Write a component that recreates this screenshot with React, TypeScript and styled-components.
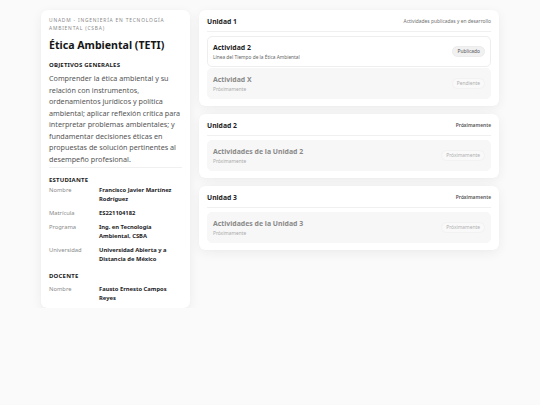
import styled, { createGlobalStyle } from "styled-components";

type Unit = {
  title: string;
  note: string;
  noteStrong?: boolean;
  items: { title: string; sub: string; status: string; active: boolean }[];
};

const units: Unit[] = [
  {
    title: "Unidad 1",
    note: "Actividades publicadas y en desarrollo",
    items: [
      {
        title: "Actividad 2",
        sub: "Línea del Tiempo de la Ética Ambiental",
        status: "Publicado",
        active: true,
      },
      { title: "Actividad X", sub: "Próximamente", status: "Pendiente", active: false },
    ],
  },
  {
    title: "Unidad 2",
    note: "Próximamente",
    noteStrong: true,
    items: [
      {
        title: "Actividades de la Unidad 2",
        sub: "Próximamente",
        status: "Próximamente",
        active: false,
      },
    ],
  },
  {
    title: "Unidad 3",
    note: "Próximamente",
    noteStrong: true,
    items: [
      {
        title: "Actividades de la Unidad 3",
        sub: "Próximamente",
        status: "Próximamente",
        active: false,
      },
    ],
  },
];

const student = [
  { label: "Nombre", value: "Francisco Javier Martínez Rodríguez" },
  { label: "Matrícula", value: "ES221104182" },
  { label: "Programa", value: "Ing. en Tecnología Ambiental, CSBA" },
  { label: "Universidad", value: "Universidad Abierta y a Distancia de México" },
];

const GlobalStyle = createGlobalStyle`
  body {
    margin: 0;
    background: #fafafa;
    font-family: "Noto Sans", "Open Sans", sans-serif;
    color: #1d1d1f;
  }
`;

const Page = styled.div`
  width: 458px;
  margin: 0 auto;
  padding-top: 10px;
  display: grid;
  grid-template-columns: 149px 300px;
  gap: 9px;
  align-items: start;
`;

const Card = styled.section`
  background: #fff;
  border-radius: 6px;
  box-shadow: 0 3px 12px rgba(0, 0, 0, 0.06), 0 0 1px rgba(0, 0, 0, 0.05);
`;

const InfoCard = styled(Card)`
  padding: 6px 8px 5px;
`;

const Kicker = styled.div`
  font-size: 4.9px;
  line-height: 8px;
  letter-spacing: 0.8px;
  text-transform: uppercase;
  color: #8a8a8a;
`;

const Title = styled.h1`
  margin: 4px 0 7px;
  font-size: 10.6px;
  line-height: 18px;
  font-weight: 700;
  color: #161616;
  white-space: nowrap;
`;

const Section = styled.h2<{ $space?: number }>`
  margin: 0 0 ${({ $space }) => $space ?? 4}px;
  font-size: 6px;
  line-height: 8px;
  font-weight: 700;
  letter-spacing: 0.2px;
  color: #222;
`;

const Paragraph = styled.p`
  margin: 0;
  font-size: 7.2px;
  line-height: 11.5px;
  color: #555;
  padding-bottom: 2px;
  border-bottom: 1px solid #f0f0f0;
`;

const Block = styled.div`
  margin-top: 8px;
`;

const Rows = styled.div`
  display: flex;
  flex-direction: column;
  gap: 5px;
`;

const Row = styled.div`
  display: grid;
  grid-template-columns: 50px 1fr;
  font-size: 5.8px;
  line-height: 9px;
`;

const Label = styled.span`
  color: #8a8a8a;
`;

const Value = styled.span`
  color: #1d1d1f;
  font-weight: 700;
`;

const Column = styled.div`
  display: flex;
  flex-direction: column;
  gap: 8px;
`;

const UnitCard = styled(Card)`
  padding: 0 8px 7px;
`;

const UnitHeader = styled.div`
  display: flex;
  justify-content: space-between;
  align-items: center;
  height: 22px;
  padding-top: 1px;
  box-sizing: border-box;
  border-bottom: 1px solid #f0f0f0;
  margin-bottom: 4px;
`;

const UnitTitle = styled.h3`
  margin: 0;
  font-size: 6.8px;
  font-weight: 700;
  color: #1d1d1f;
`;

const UnitNote = styled.span<{ $strong?: boolean }>`
  font-size: 4.9px;
  color: ${({ $strong }) => ($strong ? "#555" : "#707070")};
  font-weight: ${({ $strong }) => ($strong ? 600 : 400)};
`;

const List = styled.div`
  display: flex;
  flex-direction: column;
  gap: 1px;
`;

const Item = styled.div<{ $active: boolean }>`
  display: flex;
  justify-content: space-between;
  align-items: center;
  height: 31px;
  box-sizing: border-box;
  padding: 0 5px;
  border-radius: 5px;
  background: ${({ $active }) => ($active ? "#fff" : "#f7f7f7")};
  border: 1px solid ${({ $active }) => ($active ? "#eeeeee" : "#f7f7f7")};
`;

const ItemText = styled.div`
  display: flex;
  flex-direction: column;
  gap: 1px;
`;

const ItemTitle = styled.span<{ $active: boolean }>`
  font-size: 6.9px;
  line-height: 10px;
  font-weight: 700;
  color: ${({ $active }) => ($active ? "#1d1d1f" : "#8a8a8a")};
`;

const ItemSub = styled.span<{ $active: boolean }>`
  font-size: 4.8px;
  line-height: 7px;
  color: ${({ $active }) => ($active ? "#666" : "#aaa")};
`;

const Badge = styled.span<{ $active: boolean }>`
  font-size: 4.9px;
  line-height: 9px;
  padding: 0 4px;
  border-radius: 6px;
  color: ${({ $active }) => ($active ? "#555" : "#b0b0b0")};
  background: ${({ $active }) => ($active ? "#f1f1f1" : "#f9f9f9")};
  border: 1px solid ${({ $active }) => ($active ? "#ececec" : "#f2f2f2")};
`;

const App = () => (
  <>
    <GlobalStyle />
    <Page>
      <InfoCard>
        <Kicker>UNADM - Ingeniería en Tecnología Ambiental (CSBA)</Kicker>
        <Title>Ética Ambiental (TETI)</Title>
        <Section>OBJETIVOS GENERALES</Section>
        <Paragraph>
          Comprender la ética ambiental y su relación con instrumentos,
          ordenamientos jurídicos y política ambiental; aplicar reflexión
          crítica para interpretar problemas ambientales; y fundamentar
          decisiones éticas en propuestas de solución pertinentes al desempeño
          profesional.
        </Paragraph>
        <Block>
          <Section $space={2}>ESTUDIANTE</Section>
          <Rows>
            {student.map(({ label, value }) => (
              <Row key={label}>
                <Label>{label}</Label>
                <Value>{value}</Value>
              </Row>
            ))}
          </Rows>
        </Block>
        <Block>
          <Section $space={5}>DOCENTE</Section>
          <Rows>
            <Row>
              <Label>Nombre</Label>
              <Value>Fausto Ernesto Campos Reyes</Value>
            </Row>
          </Rows>
        </Block>
      </InfoCard>
      <Column>
        {units.map((unit) => (
          <UnitCard key={unit.title}>
            <UnitHeader>
              <UnitTitle>{unit.title}</UnitTitle>
              <UnitNote $strong={unit.noteStrong}>{unit.note}</UnitNote>
            </UnitHeader>
            <List>
              {unit.items.map((item) => (
                <Item key={item.title} $active={item.active}>
                  <ItemText>
                    <ItemTitle $active={item.active}>{item.title}</ItemTitle>
                    <ItemSub $active={item.active}>{item.sub}</ItemSub>
                  </ItemText>
                  <Badge $active={item.active}>{item.status}</Badge>
                </Item>
              ))}
            </List>
          </UnitCard>
        ))}
      </Column>
    </Page>
  </>
);

export default App;
